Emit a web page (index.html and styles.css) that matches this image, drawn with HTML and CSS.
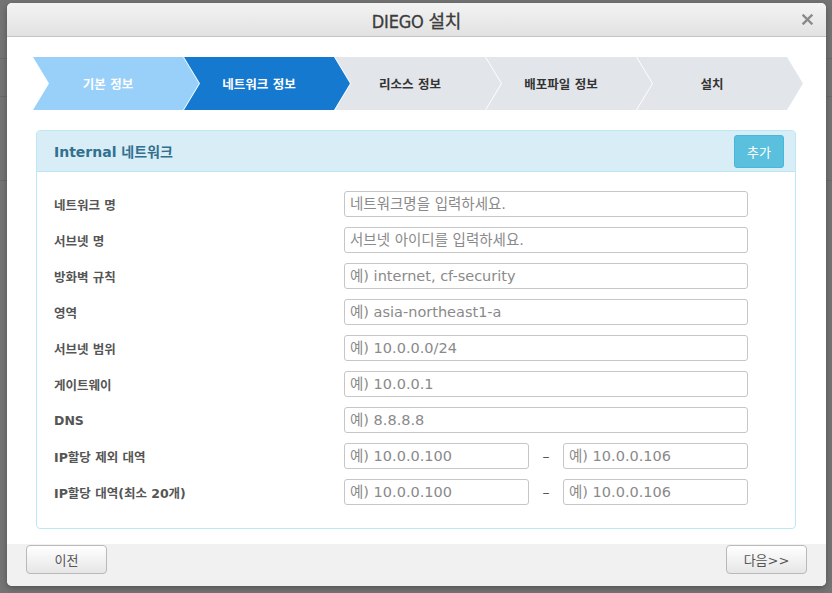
FILE: index.html
```html
<!DOCTYPE html>
<html lang="ko">
<head>
<meta charset="utf-8">
<title>DIEGO 설치</title>
<link rel="stylesheet" href="styles.css">
</head>
<body>
<div class="backdrop">
  <div class="dialog">
    <div class="dlg-header">
      <span class="dlg-title">DIEGO 설치</span>
      <span class="dlg-close" aria-label="close">
        <svg width="11" height="11" viewBox="0 0 11 11"><path d="M1.5 1.5 L9.5 9.5 M9.5 1.5 L1.5 9.5" stroke="#8a8a8a" stroke-width="2.4" stroke-linecap="square"/></svg>
      </span>
    </div>
    <div class="dlg-body">
      <div class="steps">
        <div class="step done">기본 정보</div>
        <div class="step active">네트워크 정보</div>
        <div class="step">리소스 정보</div>
        <div class="step">배포파일 정보</div>
        <div class="step">설치</div>
      </div>
      <div class="panel">
        <div class="panel-head">
          <span class="panel-title">Internal 네트워크</span>
          <button class="btn-add">추가</button>
        </div>
        <div class="panel-body">
          <div class="row"><label class="lbl">네트워크 명</label><input class="inp" placeholder="네트워크명을 입력하세요."></div>
          <div class="row"><label class="lbl">서브넷 명</label><input class="inp" placeholder="서브넷 아이디를 입력하세요."></div>
          <div class="row"><label class="lbl">방화벽 규칙</label><input class="inp" placeholder="예) internet, cf-security"></div>
          <div class="row"><label class="lbl">영역</label><input class="inp" placeholder="예) asia-northeast1-a"></div>
          <div class="row"><label class="lbl">서브넷 범위</label><input class="inp" placeholder="예) 10.0.0.0/24"></div>
          <div class="row"><label class="lbl">게이트웨이</label><input class="inp" placeholder="예) 10.0.0.1"></div>
          <div class="row"><label class="lbl">DNS</label><input class="inp" placeholder="예) 8.8.8.8"></div>
          <div class="row"><label class="lbl">IP할당 제외 대역</label>
            <div class="range"><input class="inp" placeholder="예) 10.0.0.100"><span class="dash">–</span><input class="inp" placeholder="예) 10.0.0.106"></div>
          </div>
          <div class="row"><label class="lbl">IP할당 대역(최소 20개)</label>
            <div class="range"><input class="inp" placeholder="예) 10.0.0.100"><span class="dash">–</span><input class="inp" placeholder="예) 10.0.0.106"></div>
          </div>
        </div>
      </div>
    </div>
    <div class="dlg-footer">
      <button class="btn">이전</button>
      <button class="btn">다음&gt;&gt;</button>
    </div>
  </div>
</div>
</body>
</html>
```
FILE: styles.css
```css
* { box-sizing: border-box; }
html, body { margin: 0; padding: 0; }
body {
  width: 832px;
  height: 593px;
  overflow: hidden;
  background: #727272;
  font-family: "DejaVu Sans", "Noto Sans CJK KR", sans-serif;
}
.backdrop {
  padding: 3px 0 0 7px;
  height: 593px;
  background:
    linear-gradient(#6a6a6a, #6a6a6a) 0 58px / 100% 1px no-repeat,
    linear-gradient(#6a6a6a, #6a6a6a) 0 96px / 100% 1px no-repeat,
    linear-gradient(#6a6a6a, #6a6a6a) 0 180px / 100% 1px no-repeat,
    #747474;
}
.dialog {
  width: 819px;
  height: 583px;
  background: #fff;
  border-radius: 5px;
  overflow: hidden;
  display: flex;
  flex-direction: column;
  box-shadow: 0 2px 6px rgba(0,0,0,0.3);
}
.dlg-header {
  height: 34px;
  flex: none;
  display: flex;
  align-items: center;
  justify-content: center;
  position: relative;
  background: linear-gradient(#f3f3f3, #e2e2e2);
  border-bottom: 1px solid #c4c4c4;
}
.dlg-title {
  font-family: "DejaVu Sans Condensed", "DejaVu Sans", "Noto Sans CJK KR", sans-serif;
  font-size: 18px;
  color: #3c3c3c;
  letter-spacing: -0.2px;
  -webkit-text-stroke: 0.3px #3c3c3c;
}
.dlg-close {
  position: absolute;
  right: 13px;
  top: 11px;
  width: 11px;
  height: 11px;
  display: block;
  line-height: 0;
}
.dlg-body {
  flex: 1;
  padding: 20px 0 0 26px;
}
.steps {
  display: flex;
  height: 53px;
}
.step {
  width: 166px;
  flex: none;
  height: 53px;
  margin-left: -15px;
  padding-right: 16px;
  display: flex;
  align-items: center;
  justify-content: center;
  font-size: 12.5px;
  font-weight: bold;
  color: #333;
  background: #e2e5e9;
  clip-path: polygon(0 0, calc(100% - 16px) 0, 100% 50%, calc(100% - 16px) 100%, 0 100%, 16px 50%);
}
.step:first-child { margin-left: 0; }
.step.done { background: #98d0fa; color: #fff; }
.step.active { background: #1479cf; color: #fff; }
.panel {
  margin: 20px 0 0 3px;
  width: 760px;
  border: 1px solid #bce8f1;
  border-radius: 4px;
}
.panel-head {
  height: 41px;
  background: #d9edf7;
  border-bottom: 1px solid #bce8f1;
  display: flex;
  align-items: center;
  justify-content: space-between;
  padding: 0 11px 0 17px;
}
.panel-title {
  font-size: 14px;
  font-weight: bold;
  color: #31708f;
}
.btn-add {
  width: 50px;
  height: 33px;
  margin-top: 1px;
  background: #5bc0de;
  border: 1px solid #46b8da;
  border-radius: 3px;
  color: #fff;
  font-family: "Noto Sans CJK KR", sans-serif;
  font-size: 13px;
  padding: 0;
}
.panel-body {
  padding: 19px 47px 23px 17px;
  display: flex;
  flex-direction: column;
  gap: 10px;
}
.row {
  display: grid;
  grid-template-columns: 290px 404px;
  align-items: center;
  height: 26px;
}
.lbl {
  font-size: 12.5px;
  font-weight: bold;
  color: #555;
}
.inp {
  width: 100%;
  height: 26px;
  border: 1px solid #c6c6c6;
  border-radius: 3px;
  padding: 0 5px;
  font-family: "DejaVu Sans", "Noto Sans CJK KR", sans-serif;
  font-size: 14.5px;
  color: #555;
  background: #fff;
  outline: none;
}
.inp::placeholder { color: #8a8a8a; }
.range {
  display: grid;
  grid-template-columns: 185px 34px 185px;
  align-items: center;
}
.dash {
  text-align: center;
  font-size: 14px;
  color: #555;
}
.dlg-footer {
  height: 42px;
  flex: none;
  background: #f1f1f1;
  display: flex;
  justify-content: space-between;
  align-items: flex-start;
  padding: 1px 19px 0 19px;
}
.btn {
  width: 81px;
  height: 29px;
  border: 1px solid #b9b9b9;
  border-radius: 4px;
  background: linear-gradient(#ffffff, #e6e6e6);
  font-family: "DejaVu Sans", "Noto Sans CJK KR", sans-serif;
  font-size: 13px;
  color: #555;
  padding: 0;
}
```
